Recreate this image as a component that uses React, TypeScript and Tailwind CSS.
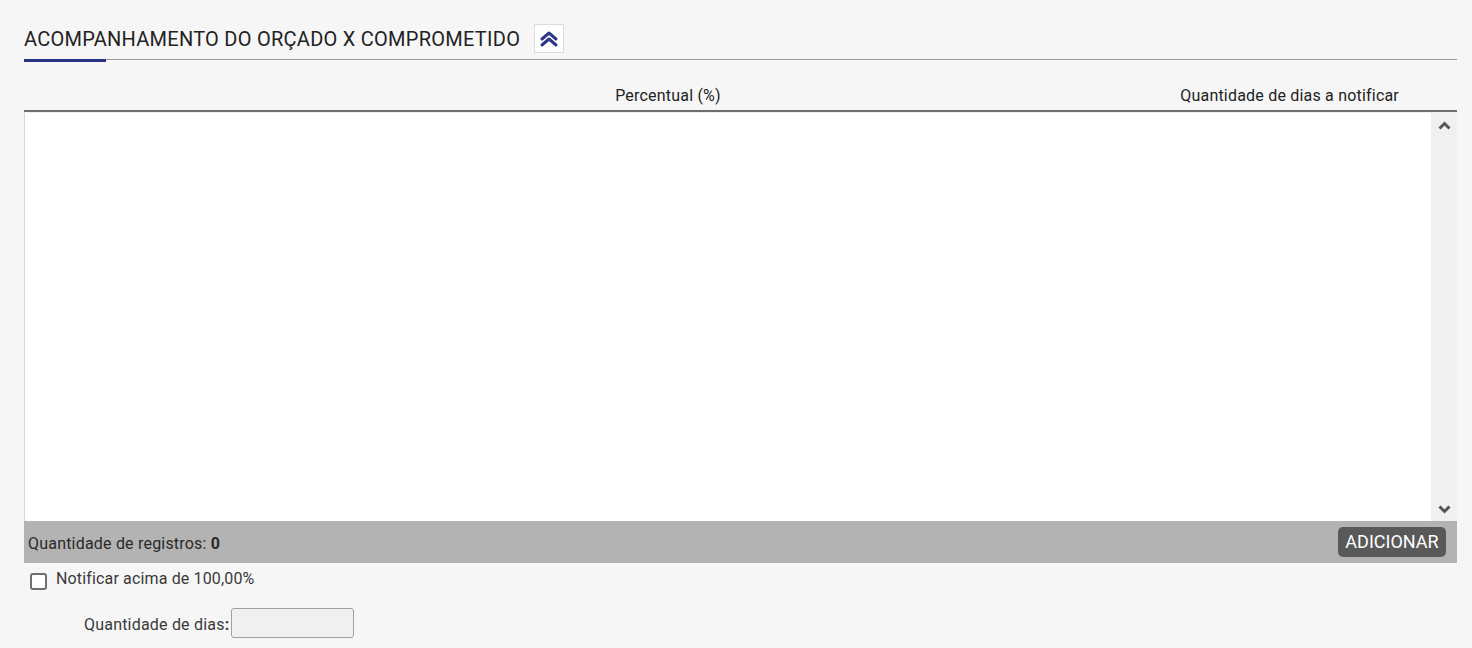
import React from "react";

export default function App() {
  return (
    <div
      className="w-[1472px] h-[648px] bg-[#f6f6f6] overflow-hidden pl-[24px] pr-[15px] pt-[24px]"
      style={{ fontFamily: "Roboto, 'Liberation Sans', sans-serif" }}
    >
      {/* Title row */}
      <div className="flex items-center h-[29px]">
        <h1 className="text-[20px] tracking-[0.26px] leading-[29px] text-[#222] font-normal pt-[1px] whitespace-nowrap">
          ACOMPANHAMENTO DO ORÇADO X COMPROMETIDO
        </h1>
        <button className="ml-[14px] w-[30px] h-[29px] bg-white border border-[#dcdcdc] flex items-center justify-center">
          <svg width="20" height="18" viewBox="0 0 20 18" fill="none">
            <path d="M3 9 L10 3 L17 9" stroke="#2e3788" strokeWidth="3" strokeLinecap="round" strokeLinejoin="round" />
            <path d="M3 15 L10 9 L17 15" stroke="#2e3788" strokeWidth="3" strokeLinecap="round" strokeLinejoin="round" />
          </svg>
        </button>
      </div>
      {/* Underline */}
      <div className="mt-[6px] h-[1px] bg-[#9a9a9a] relative">
        <div className="absolute left-0 top-0 w-[82px] h-[3px] bg-[#2b3384]" />
      </div>

      {/* Table header */}
      <div className="mt-[22px] flex h-[30px] items-center text-[16px] tracking-[0.2px] text-[#222] border-b-2 border-[#6e6e6e] whitespace-nowrap">
        <div className="w-[1288px] shrink-0 text-center">Percentual (%)</div>
        <div className="flex-1 min-w-0 flex justify-end pr-[58px]">
          <span className="shrink-0">Quantidade de dias a notificar</span>
        </div>
      </div>

      {/* Table body */}
      <div className="flex h-[409px] bg-white border-l border-[#d9d9d9] border-t border-t-[#f0f0f0]">
        <div className="flex-1" />
        <div className="w-[26px] bg-[#f0f0f0] flex flex-col items-center justify-between pt-[8px] pb-[7px]">
          <svg width="13" height="9" viewBox="0 0 13 9" fill="none">
            <path d="M1.5 7.5 L6.5 2.5 L11.5 7.5" stroke="#555" strokeWidth="3" />
          </svg>
          <svg width="13" height="9" viewBox="0 0 13 9" fill="none">
            <path d="M1.5 1.5 L6.5 6.5 L11.5 1.5" stroke="#555" strokeWidth="3" />
          </svg>
        </div>
      </div>

      {/* Footer */}
      <div className="h-[42px] bg-[#b3b3b3] flex items-center justify-between pl-[4px] pr-[11px]">
        <div className="text-[16px] tracking-[0.2px] text-[#2a2a2a] pt-[3px]">
          Quantidade de registros: <span className="font-bold">0</span>
        </div>
        <button className="h-[30px] w-[108px] rounded-[5px] bg-[#595959] text-white text-[18px] leading-[30px] text-center">
          ADICIONAR
        </button>
      </div>

      {/* Checkbox row */}
      <div className="flex items-center mt-[9px] pl-[6px]">
        <div className="w-[17px] h-[17px] border-2 border-[#6f6f6f] rounded-[3px] bg-white" />
        <span className="ml-[9px] text-[16px] tracking-[0.15px] text-[#3a3a3a] -mt-[5px]">Notificar acima de 100,00%</span>
      </div>

      {/* Quantidade de dias */}
      <div className="flex items-center mt-[17px] pl-[60px]">
        <span className="text-[16px] tracking-[0.2px] text-[#3a3a3a] pt-[4px]">
          Quantidade de dias<span className="font-bold">:</span>
        </span>
        <div className="ml-[2px] w-[123px] h-[30px] bg-[#f0f0f0] border border-[#a0a0a0] rounded-[3px]" />
      </div>
    </div>
  );
}
